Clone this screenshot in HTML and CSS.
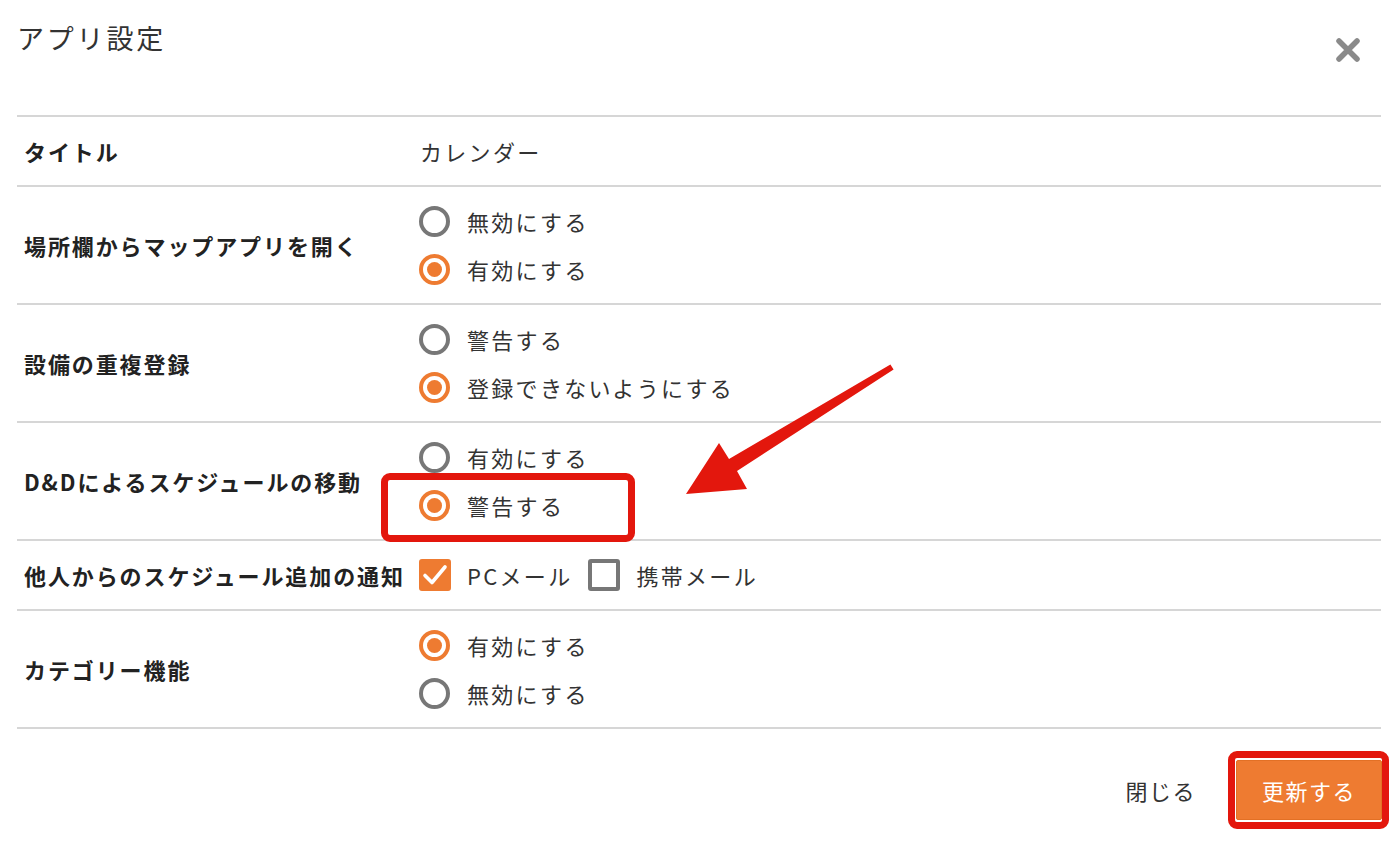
FILE: index.html
```html
<!DOCTYPE html>
<html lang="ja">
<head>
  <meta charset="UTF-8" />
  <title>アプリ設定</title>
  <link rel="stylesheet" href="styles.css">
</head>
<body>
  <div class="dialog">
    <div class="dialog-head">
      <h1>アプリ設定</h1>
      <button class="close" type="button" aria-label="閉じる">
        <svg width="26" height="26" viewBox="0 0 26 26"><path d="M4 4 L22 22 M22 4 L4 22" stroke="#8a8a8a" stroke-width="5.5" stroke-linecap="round"/></svg>
      </button>
    </div>

    <div class="settings">
      <div class="row short">
        <div class="name">タイトル</div>
        <div class="value">カレンダー</div>
      </div>

      <div class="row">
        <div class="name">場所欄からマップアプリを開く</div>
        <div class="value">
          <label class="opt"><span class="radio"></span>無効にする</label>
          <label class="opt"><span class="radio on"></span>有効にする</label>
        </div>
      </div>

      <div class="row">
        <div class="name">設備の重複登録</div>
        <div class="value">
          <label class="opt"><span class="radio"></span>警告する</label>
          <label class="opt"><span class="radio on"></span>登録できないようにする</label>
        </div>
      </div>

      <div class="row">
        <div class="name">D&amp;Dによるスケジュールの移動</div>
        <div class="value">
          <label class="opt"><span class="radio"></span>有効にする</label>
          <label class="opt marked"><span class="radio on"></span>警告する</label>
        </div>
      </div>

      <div class="row short">
        <div class="name">他人からのスケジュール追加の通知</div>
        <div class="value inline">
          <label class="opt"><span class="check on">
            <svg width="32" height="32" viewBox="0 0 32 32"><path d="M6 16.5 L13 23.5 L26 8" fill="none" stroke="#fff" stroke-width="3.6" stroke-linecap="round" stroke-linejoin="round"/></svg>
          </span>PCメール</label>
          <label class="opt"><span class="check"></span>携帯メール</label>
        </div>
      </div>

      <div class="row">
        <div class="name">カテゴリー機能</div>
        <div class="value">
          <label class="opt"><span class="radio on"></span>有効にする</label>
          <label class="opt"><span class="radio"></span>無効にする</label>
        </div>
      </div>
    </div>

    <div class="dialog-foot">
      <button class="btn-close" type="button">閉じる</button>
      <button class="btn-save marked" type="button">更新する</button>
    </div>
  </div>

  <!-- annotation arrow -->
  <svg class="arrow" width="1398" height="844" viewBox="0 0 1398 844">
    <polygon fill="#e3170d" points="890.4,364.4 893.6,369.6 737,471 747,489 686,494 719,443 729,459"/>
  </svg>
</body>
</html>
```

FILE: styles.css
```css
body { margin: 0; font-family: "Noto Sans CJK JP", "Noto Sans", sans-serif; color: #333; background: #fff; width: 1398px; height: 844px; overflow: hidden; position: relative; }

.dialog-head { display: flex; justify-content: space-between; height: 115px; padding: 0 37px 0 17px; }
.dialog-head h1 { margin: 0; padding-top: 18px; font-size: 27px; font-weight: normal; letter-spacing: 2.8px; line-height: 40px; color: #333; }
.close { border: none; background: none; padding: 0; margin-top: 37px; width: 26px; height: 26px; cursor: pointer; }

.settings { margin: 0 17px; width: 1364px; border-top: 2px solid #d6d6d6; }
.row { display: flex; align-items: center; height: 116px; border-bottom: 2px solid #d6d6d6; }
.row.short { height: 68px; }
.name { width: 396px; padding-left: 7px; font-size: 22px; font-weight: bold; letter-spacing: 1.9px; color: #222; }
.value { display: flex; flex-direction: column; font-size: 22px; letter-spacing: 2.3px; color: #333; }
.value.inline { flex-direction: row; }

.opt { display: flex; align-items: center; height: 48px; margin-left: -1px; position: relative; }
.inline .opt { margin-right: 17px; }

.radio { width: 23px; height: 23px; border: 4px solid #777; border-radius: 50%; margin-right: 17px; position: relative; }
.radio.on { border-color: #ee7b31; }
.radio.on::after { content: ""; position: absolute; left: 4px; top: 4px; width: 15px; height: 15px; border-radius: 50%; background: #ee7b31; }

.check { width: 24px; height: 24px; border: 4px solid #777; border-radius: 3px; margin-right: 16px; position: relative; }
.check.on { background: #ee7b31; border-color: #ee7b31; }
.check svg { position: absolute; left: -4px; top: -4px; }

.dialog-foot { display: flex; justify-content: flex-end; align-items: center; padding: 31px 16px 0 0; }
.btn-close { border: none; background: none; font-family: inherit; font-size: 22px; letter-spacing: 1.5px; color: #333; margin-right: 40px; padding: 0; }
.btn-save { width: 146px; height: 60px; border: 1px solid #e27025; border-radius: 2px; background: #ee7b31; color: #fff; font-family: inherit; font-size: 22px; letter-spacing: 1.5px; position: relative; }

/* red annotation frames */
.marked::after { content: ""; position: absolute; border: 7px solid #e3170d; border-radius: 9px; pointer-events: none; }
.opt.marked::after { left: -38px; right: -46px; top: -8px; bottom: -13px; }
.btn-save.marked::after { left: -9px; right: -8px; top: -10px; bottom: -10px; }

.arrow { position: absolute; left: 0; top: 0; pointer-events: none; }
```
